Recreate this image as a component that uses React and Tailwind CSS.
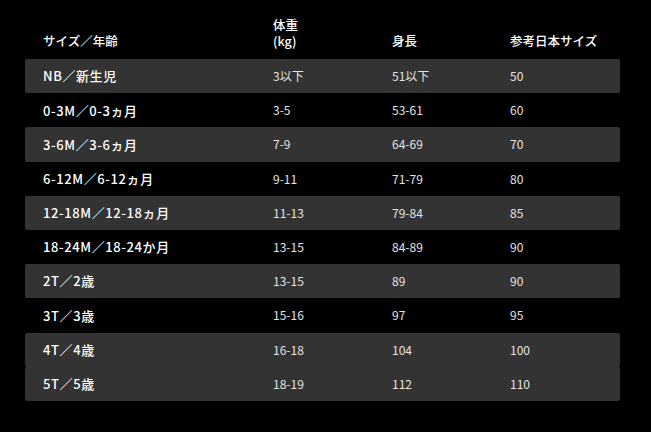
import React from "react";

const rows = [
  ["NB／新生児", "3以下", "51以下", "50", true],
  ["0-3M／0-3ヵ月", "3-5", "53-61", "60", false],
  ["3-6M／3-6ヵ月", "7-9", "64-69", "70", true],
  ["6-12M／6-12ヵ月", "9-11", "71-79", "80", false],
  ["12-18M／12-18ヵ月", "11-13", "79-84", "85", true],
  ["18-24M／18-24か月", "13-15", "84-89", "90", false],
  ["2T／2歳", "13-15", "89", "90", true],
  ["3T／3歳", "15-16", "97", "95", false],
  ["4T／4歳", "16-18", "104", "100", true],
  ["5T／5歳", "18-19", "112", "110", true],
];

const grid = "grid grid-cols-[230px_119px_118px_1fr] pl-[18px]";

function App() {
  return (
    <div
      className="w-[651px] h-[432px] bg-black text-white overflow-hidden"
      style={{ fontFamily: '"Noto Sans CJK JP", "Noto Sans", sans-serif' }}
    >
      <div className="ml-[25px] w-[595px] pt-[17px]">
        {/* Header */}
        <div className={`${grid} items-end pb-[10px] text-[12.5px] leading-[16px] font-medium`}>
          <div>サイズ／年齢</div>
          <div className="flex flex-col">
            <span>体重</span>
            <span>(kg)</span>
          </div>
          <div>身長</div>
          <div>参考日本サイズ</div>
        </div>

        {/* Body */}
        <div>
          {rows.map(([size, weight, height, jp, shaded], i) => (
            <div
              key={i}
              className={`${grid} h-[34.2px] items-center text-[12px] rounded-[2px] ${
                shaded ? "bg-[#333333]" : "bg-black"
              }`}
            >
              <div className="font-medium text-white text-[13px] tracking-[0.6px]">{size}</div>
              <div className="text-[#e4e4e4]">{weight}</div>
              <div className="text-[#e4e4e4]">{height}</div>
              <div className="text-[#e4e4e4]">{jp}</div>
            </div>
          ))}
        </div>
      </div>
    </div>
  );
}

export default App;
